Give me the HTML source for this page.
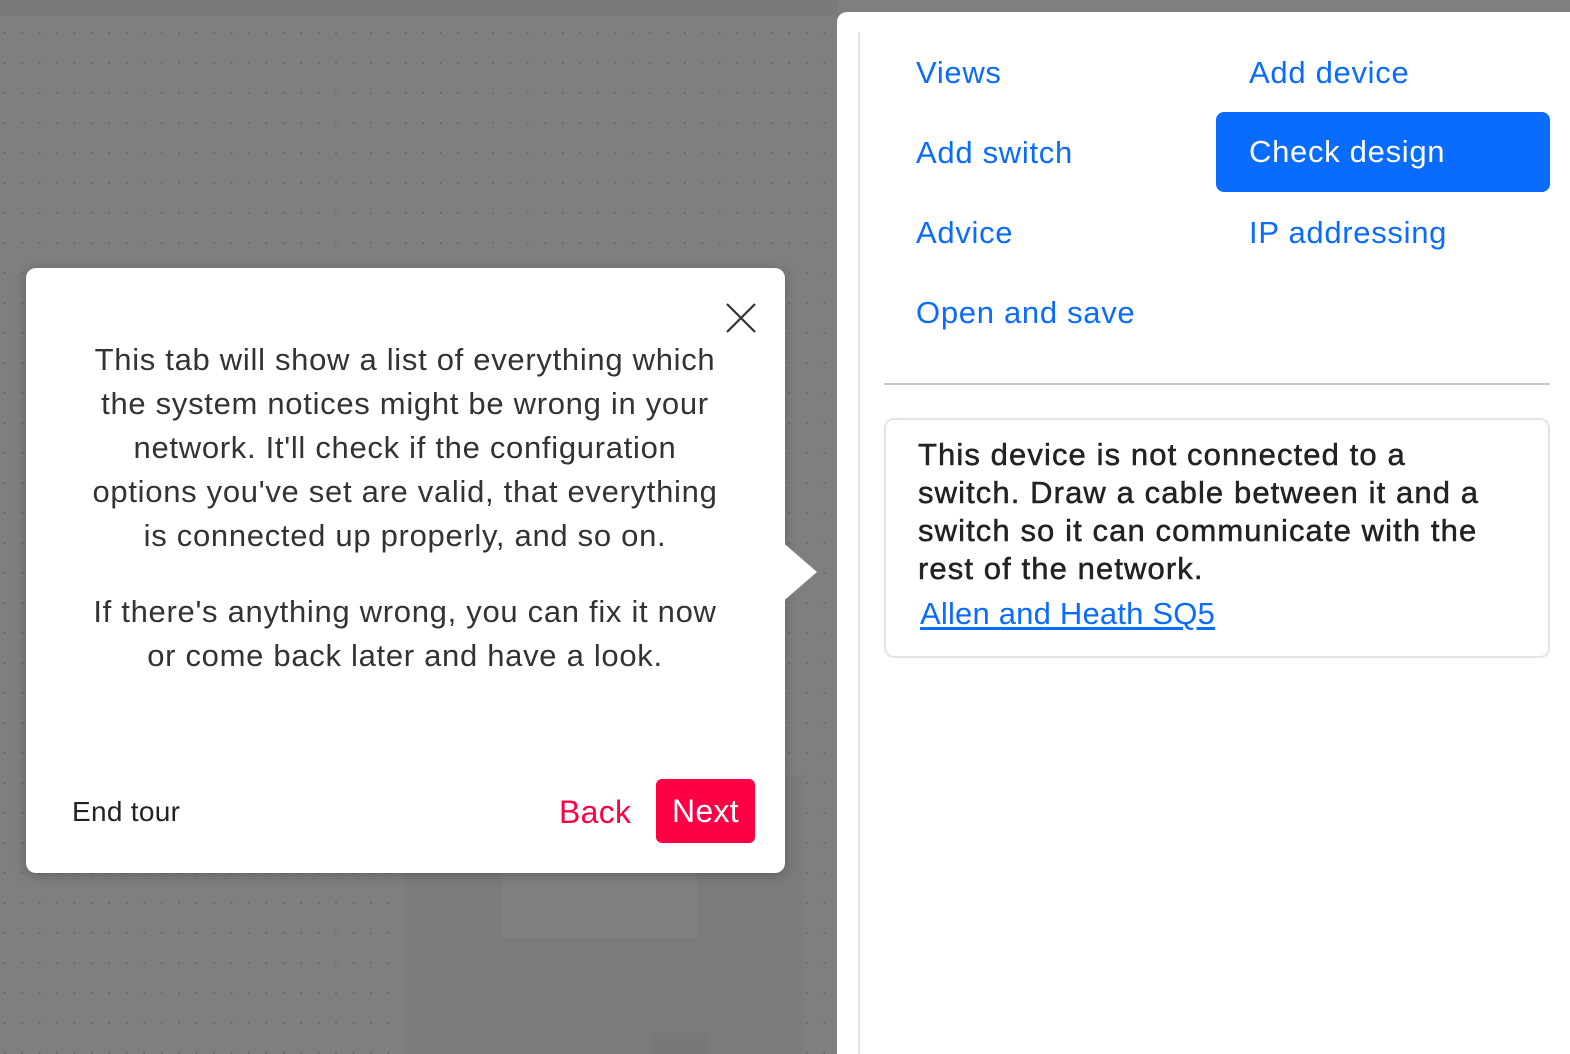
<!DOCTYPE html>
<html><head><style>
*{margin:0;padding:0;box-sizing:border-box}
body{width:1570px;height:1054px;position:relative;overflow:hidden;background:#7f7f7f;font-family:"Liberation Sans",sans-serif}
.dots{position:absolute;left:0;top:15px;width:837px;height:1039px;background-image:radial-gradient(circle,#5e5e5e 0.7px,transparent 1px);background-size:17.45px 30px;background-position:-4px 3px}
.top{position:absolute;left:0;top:0;width:837px;height:15px;background:#7a7a7a}
.s1{position:absolute;left:405px;top:775px;width:398px;height:279px;background:#7b7b7b}
.s2{position:absolute;left:501px;top:873px;width:196px;height:65px;background:#808080}
.s3{position:absolute;left:652px;top:1033px;width:54px;height:21px;background:#787878}
.panel{position:absolute;left:837px;top:12px;width:733px;height:1042px;background:#fff;border-top-left-radius:10px}
.vl{position:absolute;left:858px;top:32px;width:2px;height:1022px;background:#e4e4e4}
.lk{position:absolute;color:#0a6cff;font-size:31px;line-height:40px;letter-spacing:0.7px}
.btn{position:absolute;left:1216px;top:112px;width:334px;height:80px;background:#0a6cff;border-radius:8px;color:#fff;font-size:31px;line-height:80px;padding-left:33px;letter-spacing:0.7px}
.hr{position:absolute;left:884px;top:383px;width:666px;height:2px;background:#c8c8c8}
.card{position:absolute;left:884px;top:418px;width:666px;height:240px;border:2px solid #e2e4e7;border-radius:10px}
.ct{position:absolute;left:918px;top:436px;font-size:31px;line-height:38px;color:#222;-webkit-text-stroke:0.5px #222;letter-spacing:1.1px;white-space:nowrap}
.ca{position:absolute;left:920px;top:594px;font-size:31px;line-height:40px;color:#0a6cff;text-decoration:underline;text-underline-offset:3px;letter-spacing:0.2px}
.pop{position:absolute;left:26px;top:268px;width:759px;height:605px;background:#fff;border-radius:10px;box-shadow:0 2px 12px rgba(0,0,0,.25)}
.arrow{position:absolute;left:780px;top:540px;width:0;height:0;border-top:32px solid transparent;border-bottom:32px solid transparent;border-left:37px solid #fff}
.pt{position:absolute;left:40px;width:730px;text-align:center;font-size:31px;line-height:44px;color:#333;letter-spacing:0.7px;white-space:nowrap}
.end{position:absolute;left:72px;top:794px;font-size:28px;line-height:36px;color:#222;letter-spacing:0.3px}
.back{position:absolute;left:559px;top:792px;font-size:32px;line-height:40px;color:#ff0044;letter-spacing:0.3px}
.next{position:absolute;left:656px;top:779px;width:99px;height:64px;background:#ff0044;border-radius:6px;color:#fff;font-size:32px;line-height:64px;text-align:center;letter-spacing:0.3px}
</style></head><body>
<div class="top"></div>
<div class="dots"></div>
<div class="s1"></div><div class="s2"></div><div class="s3"></div>
<div class="panel"></div>
<div class="vl"></div>
<div class="lk" style="left:916px;top:53px">Views</div>
<div class="lk" style="left:1249px;top:53px">Add device</div>
<div class="lk" style="left:916px;top:133px">Add switch</div>
<div class="btn">Check design</div>
<div class="lk" style="left:916px;top:213px">Advice</div>
<div class="lk" style="left:1249px;top:213px">IP addressing</div>
<div class="lk" style="left:916px;top:293px">Open and save</div>
<div class="hr"></div>
<div class="card"></div>
<div class="ct">This device is not connected to a<br>switch. Draw a cable between it and a<br>switch so it can communicate with the<br>rest of the network.</div>
<div class="ca">Allen and Heath SQ5</div>
<div class="pop"></div>
<div class="arrow"></div>
<svg style="position:absolute;left:725px;top:302px" width="32" height="32" viewBox="0 0 32 32"><path d="M2 2L30 30M30 2L2 30" stroke="#333" stroke-width="2.2" fill="none"/></svg>
<div class="pt" style="top:338px">This tab will show a list of everything which<br>the system notices might be wrong in your<br>network. It'll check if the configuration<br>options you've set are valid, that everything<br>is connected up properly, and so on.</div>
<div class="pt" style="top:590px">If there's anything wrong, you can fix it now<br>or come back later and have a look.</div>
<div class="end">End tour</div>
<div class="back">Back</div>
<div class="next">Next</div>
</body></html>
